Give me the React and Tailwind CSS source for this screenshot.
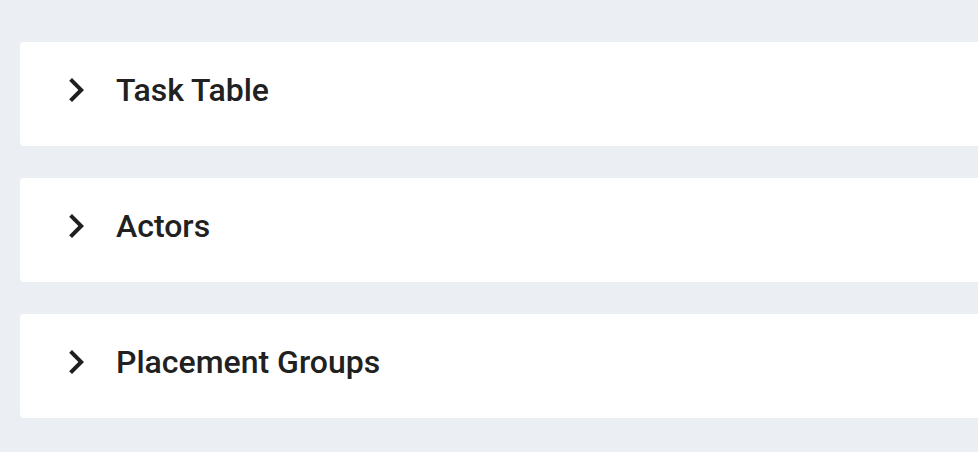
import { useState } from "react";

const sections = ["Task Table", "Actors", "Placement Groups"];

function Chevron() {
  return (
    <svg viewBox="0 0 24 24" className="w-12 h-12 shrink-0 fill-[#1f1f1f]">
      <path d="M10 6 8.59 7.41 13.17 12l-4.58 4.59L10 18l6-6z" />
    </svg>
  );
}

function Section({ title }) {
  const [open, setOpen] = useState(false);
  return (
    <div className="bg-white rounded-[4px] w-[1000px]">
      <button
        onClick={() => setOpen(!open)}
        className="flex items-center gap-4 pl-8 pt-6 pb-8 w-full text-left"
      >
        <Chevron />
        <span className="text-[32px] leading-[48px] font-medium text-[#212121]">{title}</span>
      </button>
    </div>
  );
}

export default function App() {
  return (
    <div
      className="w-[978px] h-[452px] overflow-hidden bg-[#ebeef2] pl-5 pt-[42px] flex flex-col gap-8"
      style={{ fontFamily: "Roboto, 'Noto Sans', sans-serif" }}
    >
      {sections.map((s) => (
        <Section key={s} title={s} />
      ))}
    </div>
  );
}
